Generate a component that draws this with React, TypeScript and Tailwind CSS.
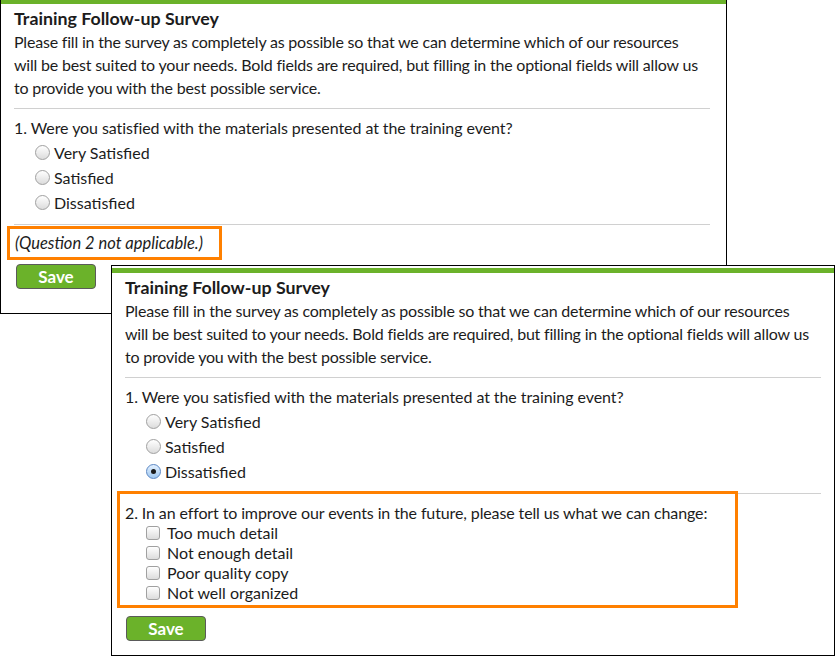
import React from "react";

function Radio({ checked }: { checked?: boolean }) {
  return checked ? (
    <span className="flex h-[15px] w-[15px] shrink-0 items-center justify-center rounded-full border border-[#5b87c4] bg-gradient-to-b from-[#e4f1ff] to-[#9fc7ef]">
      <span className="h-[5px] w-[5px] rounded-full bg-[#1a1a1a]" />
    </span>
  ) : (
    <span className="h-[15px] w-[15px] shrink-0 rounded-full border border-[#a0a0a0] bg-gradient-to-b from-white to-[#dcdcdc]" />
  );
}

function Checkbox() {
  return (
    <span className="h-[14px] w-[14px] shrink-0 rounded-[3px] border border-[#a0a0a0] bg-gradient-to-b from-white to-[#dcdcdc]" />
  );
}

function SaveButton() {
  return (
    <button className="flex h-[25px] w-[80px] items-center justify-center rounded-[4px] border border-[#5a5a5a] bg-[#6bb22a] text-[17px] font-bold text-white">
      Save
    </button>
  );
}

function Panel({ expanded }: { expanded: boolean }) {
  const options = ["Very Satisfied", "Satisfied", "Dissatisfied"];
  const checks = ["Too much detail", "Not enough detail", "Poor quality copy", "Not well organized"];
  return (
    <div className="flex h-full flex-col border border-black bg-white pt-[2px] text-[#1c1c1c]">
      <div className="h-[5px] bg-[#6bb22a]" />
      <div className="flex w-[709px] flex-col pl-[13px] pt-[3px] text-[16px] leading-[23px]">
        <div className="text-[17.8px] font-bold">Training Follow-up Survey</div>
        <p className="tracking-[-0.2px]">
          Please fill in the survey as completely as possible so that we can determine which of our resources
          <br />
          will be best suited to your needs. Bold fields are required, but filling in the optional fields will allow us
          <br />
          to provide you with the best possible service.
        </p>
        <div className="mt-[9px] h-px w-[696px] bg-[#d0d0d0]" />
        <div className="mt-[7px] tracking-[-0.07px]">
          1. Were you satisfied with the materials presented at the training event?
        </div>
        <div className="mt-[1px] flex flex-col">
          {options.map((o, i) => (
            <div key={o} className="flex h-[25px] items-center gap-[4px] pl-[21px]">
              <Radio checked={expanded && i === 2} />
              <span>{o}</span>
            </div>
          ))}
        </div>
        <div className="mt-[9px] h-px w-[696px] bg-[#d0d0d0]" />
        {expanded ? (
          <div className="ml-[-8px] mt-[-3px] w-[621px] border-[3px] border-[#ff8000] pb-[2px] pl-[5px] pt-[9px] leading-[20px]">
            <div className="tracking-[-0.12px]">
              2. In an effort to improve our events in the future, please tell us what we can change:
            </div>
            {checks.map((c) => (
              <div key={c} className="flex h-[20px] items-center gap-[7px] pl-[21px]">
                <Checkbox />
                <span>{c}</span>
              </div>
            ))}
          </div>
        ) : (
          <div className="ml-[-7px] mt-[1px] w-[215px] border-[3px] border-[#ff8000] pb-[2px] pl-[5px] pt-[3px] text-[16.5px] italic">
            (Question 2 not applicable.)
          </div>
        )}
        <div className={expanded ? "mt-[8px] pl-[1px]" : "mt-[4px] pl-[2px]"}>
          <SaveButton />
        </div>
      </div>
    </div>
  );
}

export default function App() {
  return (
    <div
      className="relative h-[657px] w-[837px] overflow-hidden bg-white"
      style={{ fontFamily: "Lato, 'Open Sans', sans-serif" }}
    >
      <div className="absolute left-0 top-[-4px] h-[318px] w-[727px]">
        <Panel expanded={false} />
      </div>
      <div className="absolute left-[111px] top-[265px] h-[391px] w-[724px]">
        <Panel expanded={true} />
      </div>
    </div>
  );
}
